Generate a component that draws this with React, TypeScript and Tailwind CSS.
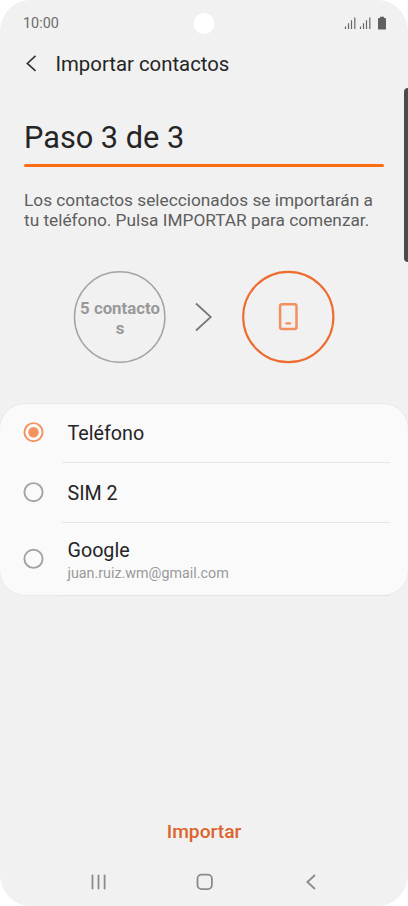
import React from "react";

type Option = { label: string; detail?: string; selected?: boolean };

const options: Option[] = [
  { label: "Teléfono", selected: true },
  { label: "SIM 2" },
  { label: "Google", detail: "juan.ruiz.wm@gmail.com" },
];

function Signal() {
  return (
    <svg width="12" height="14" viewBox="0 0 12 14" stroke="#666" strokeWidth="1.2">
      <path d="M1.500 13v-2.500M4.500 13V7.200M7.500 13V4.200M10.800 13V1.500" />
    </svg>
  );
}

function StatusBar() {
  return (
    <div className="flex h-[47px] items-center justify-between pl-[23px] pr-[21px]">
      <span className="w-[98px] text-[14.4px] leading-[20px] text-[#6c6c6c]">10:00</span>
      <div className="h-[21px] w-[21px] -translate-x-[1.5px] rounded-full bg-white" />
      <div className="flex h-[14px] w-[98px] -translate-y-[1px] items-center justify-end">
        <Signal />
        <span className="w-[3px]" />
        <Signal />
        <svg className="ml-[6px]" width="10" height="14" viewBox="0 0 10 14" fill="#606060">
          <path d="M3 .7h4v1.200h1.200q.8 0 .8.8V13q0 .5-.6.5H1.600Q1 13.500 1 13V2.700q0-.8.8-.8H3z" />
        </svg>
      </div>
    </div>
  );
}

function Header() {
  return (
    <header className="flex h-[34px] items-center">
      <svg className="ml-[24px]" width="14" height="18" viewBox="0 0 14 18" fill="none" stroke="#333" strokeWidth="1.600">
        <path d="M11.500 .9 3.300 8.400l8.200 7.500" />
      </svg>
      <h1 className="ml-[17.5px] text-[20.35px] leading-[24px] text-[#252525]">Importar contactos</h1>
    </header>
  );
}

function Transfer() {
  return (
    <div className="mt-[39px] flex h-[94px] items-center pl-[73px]">
      <div className="relative flex h-[94px] w-[94px] items-center justify-center">
        <svg className="absolute inset-0" width="94" height="94" fill="none" stroke="#a5a5a5" strokeWidth="1.500">
          <circle cx="46.700" cy="47" r="45.200" />
        </svg>
        <p className="w-[82px] break-all pt-[3px] text-center text-[16.8px] font-bold leading-[20px] text-[#999]">
          5 contactos
        </p>
      </div>
      <svg className="ml-[26px] mr-[28px]" width="20" height="32" viewBox="0 0 20 32" fill="none" stroke="#777" strokeWidth="1.700">
        <path d="M3 2.500 17.800 16 3 29.500" />
      </svg>
      <svg width="94" height="94" viewBox="0 0 94 94" fill="none">
        <circle cx="47.300" cy="47" r="45.100" stroke="#ed6c2e" strokeWidth="2.100" />
        <rect x="39.100" y="34.200" width="16.400" height="24.800" rx="2" stroke="#f38e5e" strokeWidth="2.500" />
        <path d="M45.300 53.300h4" stroke="#f38e5e" strokeWidth="2.200" strokeLinecap="round" />
      </svg>
    </div>
  );
}

function Radio({ selected, lowered }: { selected?: boolean; lowered?: boolean }) {
  const color = selected ? "#f2925f" : "#a3a3a3";
  const cy = lowered ? 10.8 : 10.2;
  return (
    <svg width="22" height="22" viewBox="0 0 22 22" fill="none">
      <circle cx="11.500" cy={cy} r="9.100" stroke={color} strokeWidth="1.900" />
      {selected && <circle cx="11.500" cy={cy} r="5.200" fill={color} />}
    </svg>
  );
}

function OptionRow({ label, detail, selected }: Option) {
  return (
    <div className={`flex pl-[22px] ${detail ? "h-[73px]" : "h-[60px]"}`}>
      <div className="flex items-center">
        <Radio selected={selected} lowered={!!detail} />
      </div>
      <div className={`ml-[18px] mr-[18px] flex flex-1 flex-col justify-center border-b border-[#e5e5e5] pl-[5.5px] ${detail ? "pt-[5px]" : "pt-[4px]"}`}>
        <span className="text-[19.7px] leading-[24px] text-[#252525]">{label}</span>
        {detail && <span className="text-[14.3px] leading-[21px] text-[#999]">{detail}</span>}
      </div>
    </div>
  );
}

export default function App() {
  return (
    <div className="h-[906px] w-[408px] bg-white font-['Roboto',sans-serif]">
      <div className="relative flex h-full flex-col overflow-hidden rounded-[31px] bg-[#f1f1f1]">
        <StatusBar />
        <Header />
        <section className="px-6 pt-[39px]">
          <h2 className="text-[30.7px] leading-[36px] text-[#252525]">Paso 3 de 3</h2>
          <div className="mt-[8px] h-[3px] rounded-full bg-[#fb6d13]" />
          <p className="mt-[23px] whitespace-nowrap text-[17.25px] leading-[20.3px] text-[#5e5e5e]">
            Los contactos seleccionados se importarán a<br />
            tu teléfono. Pulsa IMPORTAR para comenzar.
          </p>
        </section>
        <Transfer />
        <div className="-mx-px mt-[39px] h-[193px] rounded-[26px] border border-[#e9e9e9] bg-[#fafafa]">
          <div className="-mt-px">
            {options.map((o) => (
              <OptionRow key={o.label} {...o} />
            ))}
          </div>
        </div>
        <div className="flex-1" />
        <button className="h-[30px] self-center text-[19.2px] font-medium leading-[30px] text-[#dc642c]">Importar</button>
        <nav className="mb-[12px] mt-[23px] flex h-[24px] items-center text-[#8b8b8b]">
          <svg className="ml-[86px]" width="24" height="24" fill="none" stroke="currentColor" strokeWidth="1.800" strokeLinecap="round">
            <path d="M6.500 5.500v13M12.500 5.500v13M18.600 5.500v13" />
          </svg>
          <svg className="ml-[83px]" width="24" height="24" fill="none" stroke="currentColor" strokeWidth="1.800">
            <rect x="4.500" y="4.700" width="14.400" height="14.400" rx="4" />
          </svg>
          <svg className="ml-[82px]" width="24" height="24" fill="none" stroke="currentColor" strokeWidth="1.800">
            <path d="M16 5 8.400 12l7.600 7" />
          </svg>
        </nav>
        <div className="absolute right-0 top-[88px] h-[174px] w-[4px] rounded-l-[4px] bg-[#4a4b4b]" />
      </div>
    </div>
  );
}
